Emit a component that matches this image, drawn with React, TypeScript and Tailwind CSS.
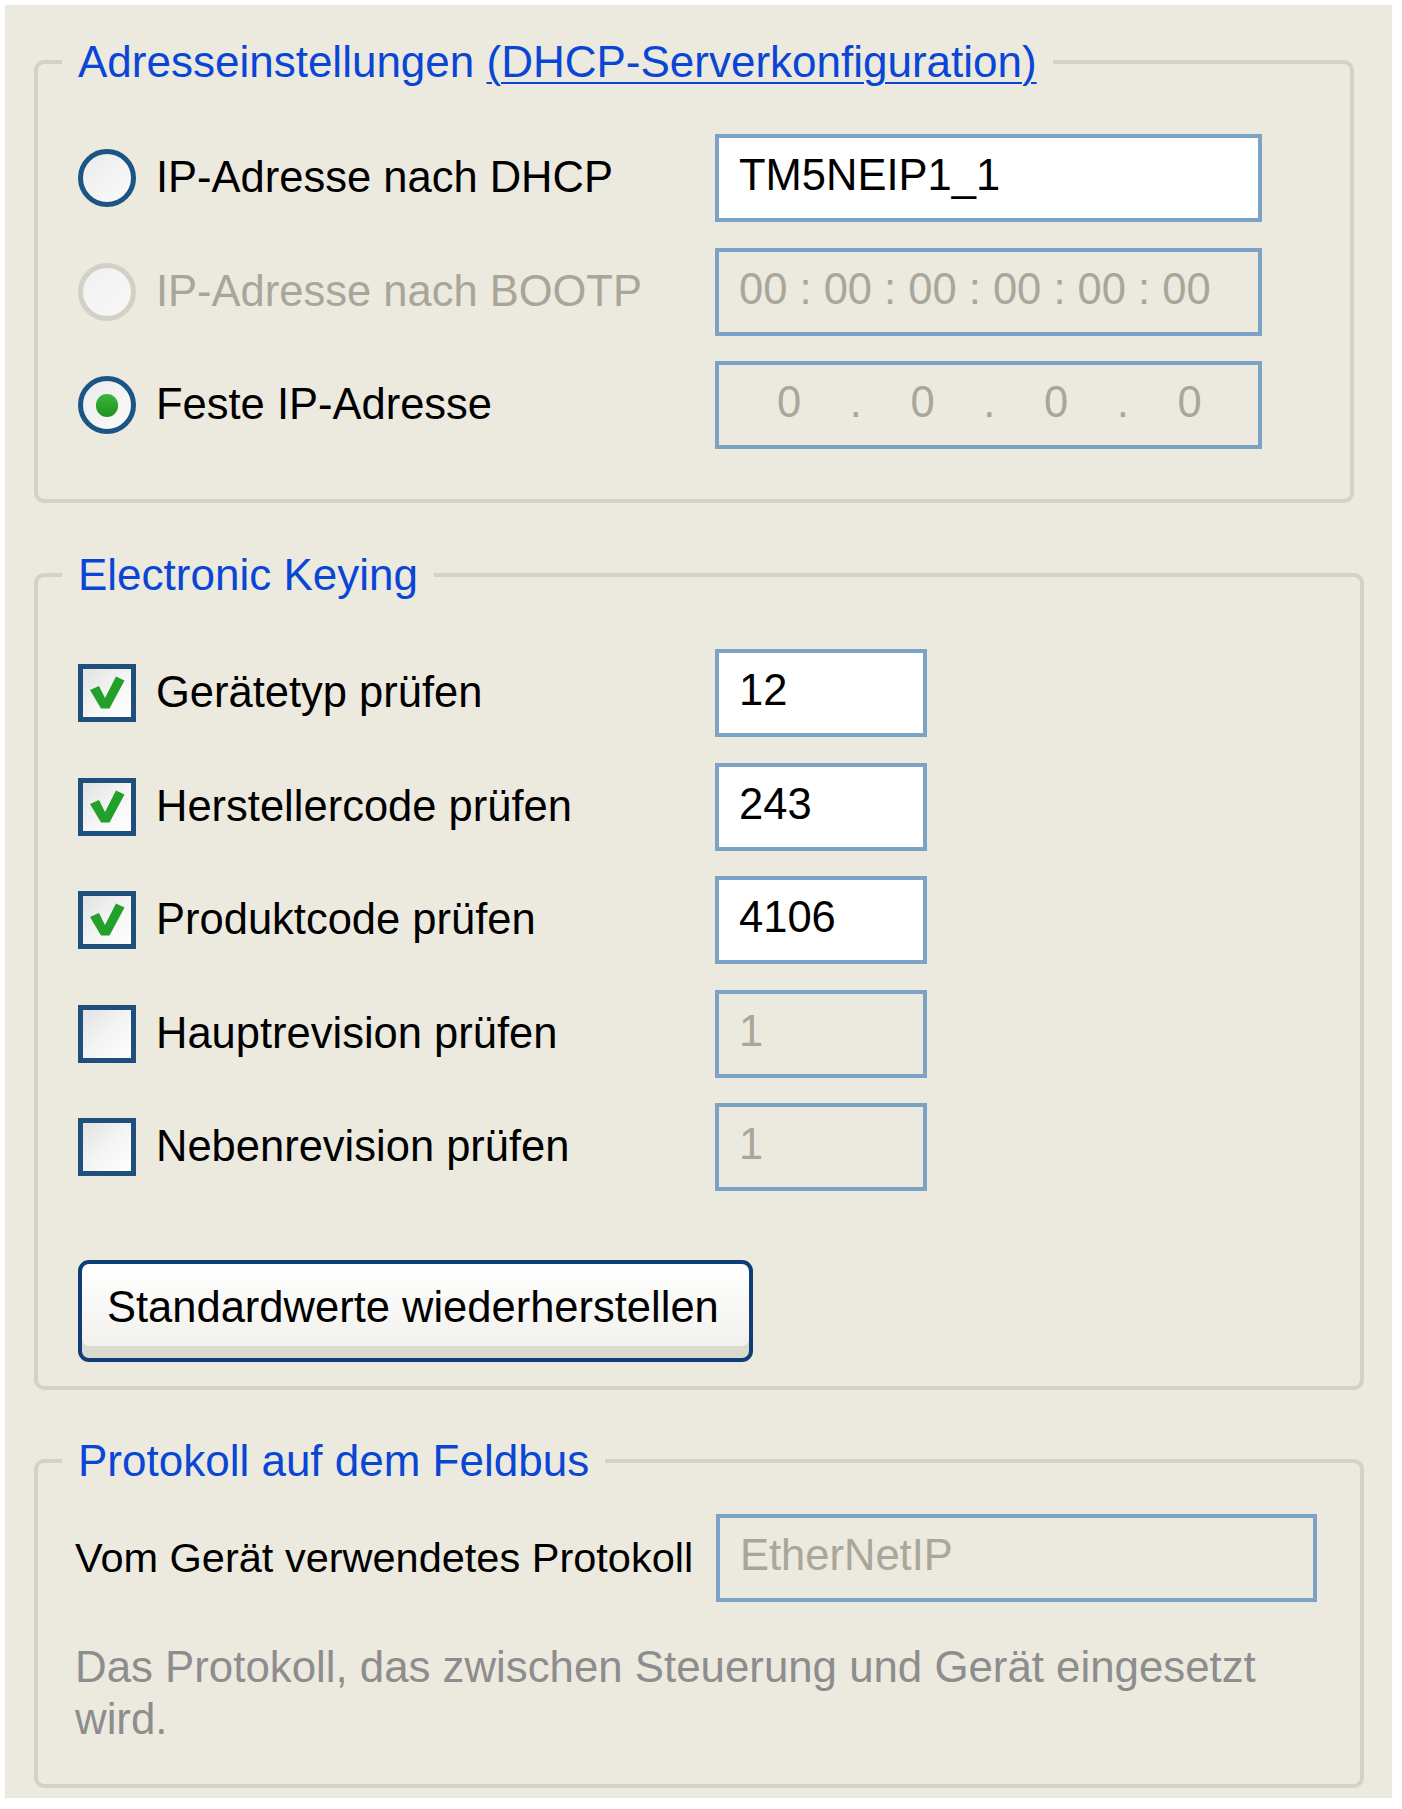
import type { ReactNode } from 'react';

function Radio({ checked, disabled }: { checked?: boolean; disabled?: boolean }) {
    return (
        <span
            className={
                disabled
                    ? 'w-[58px] h-[58px] shrink-0 rounded-full border-[5px] border-[#d3d1c5] bg-linear-to-br from-[#f1f1f1] to-[#f8f8f8] flex items-center justify-center'
                    : 'w-[58px] h-[58px] shrink-0 rounded-full border-[5px] border-[#1b5584] bg-linear-to-br from-[#ebebeb] to-[#fbfbfb] flex items-center justify-center'
            }
        >
            {checked && <span className="w-[22px] h-[23px] rounded-full bg-linear-to-b from-[#3cb53c] to-[#1f921f]"></span>}
        </span>
    );
}

function Checkbox({ checked }: { checked?: boolean }) {
    return (
        <span className="w-[58px] h-[58px] shrink-0 border-[5px] border-[#1e4f7d] bg-linear-to-br from-[#e2e2e2] via-[#f4f4f4] to-white flex items-center justify-center">
            {checked && (
                <svg width="48" height="48" viewBox="0 0 48 48">
                    <path d="M7 21 L16 17 L22 29 L33 7.5 L41.5 11.5 L26.5 39.5 L18 39.5 Z" fill="#22a02a" />
                </svg>
            )}
        </span>
    );
}

function Field({ children, white, width }: { children: ReactNode; white?: boolean; width: string }) {
    return (
        <div className={`${width} h-[88px] border-4 border-[#7ca2c5] ${white ? 'bg-white text-black' : 'text-[#a9a69a]'} px-5 pb-1 flex items-center whitespace-pre`}>
            {children}
        </div>
    );
}

function Legend({ children, shift = '-ml-4' }: { children: ReactNode; shift?: string }) {
    return <legend className={`${shift} px-4 text-[44px] leading-[50px] text-[#0a46d6]`}>{children}</legend>;
}

const keying = [
    { label: 'Gerätetyp prüfen', value: '12', on: true },
    { label: 'Herstellercode prüfen', value: '243', on: true },
    { label: 'Produktcode prüfen', value: '4106', on: true },
    { label: 'Hauptrevision prüfen', value: '1', on: false },
    { label: 'Nebenrevision prüfen', value: '1', on: false },
];

export default function App() {
    return (
        <div className="min-h-screen bg-white pt-[5px] pl-[5px] font-['Liberation_Sans',Arial,sans-serif] text-[43.5px]">
            <div className="w-[1387px] h-[1793px] bg-[#ece9df] pl-[29px] pt-[32px] flex flex-col">
                {/* Adresseinstellungen */}
                <fieldset className="w-[1320px] border-4 border-[#d4d2c1] rounded-[10px] pl-[40px] pt-[47px] pb-[50px]">
                    <Legend>
                        Adresseinstellungen <span className="underline underline-offset-[5px] decoration-2">(DHCP-Serverkonfiguration)</span>
                    </Legend>
                    <div className="flex flex-col gap-[25.5px]">
                        <div className="grid grid-cols-[637px_547px] items-center">
                            <div className="flex items-center gap-5">
                                <Radio />
                                <span>IP-Adresse nach DHCP</span>
                            </div>
                            <Field white width="w-[547px]">TM5NEIP1_1</Field>
                        </div>
                        <div className="grid grid-cols-[637px_547px] items-center">
                            <div className="flex items-center gap-5 text-[#a9a699]">
                                <Radio disabled />
                                <span>IP-Adresse nach BOOTP</span>
                            </div>
                            <Field width="w-[547px]">00 : 00 : 00 : 00 : 00 : 00</Field>
                        </div>
                        <div className="grid grid-cols-[637px_547px] items-center">
                            <div className="flex items-center gap-5">
                                <Radio checked />
                                <span>Feste IP-Adresse</span>
                            </div>
                            <div className="w-[547px] h-[88px] border-4 border-[#7ca2c5] text-[#a9a69a] pl-[30px] pb-1 flex items-center">
                                <span className="w-[80px] text-center">0</span>
                                <span className="w-[53.5px] text-center">.</span>
                                <span className="w-[80px] text-center">0</span>
                                <span className="w-[53.5px] text-center">.</span>
                                <span className="w-[80px] text-center">0</span>
                                <span className="w-[53.5px] text-center">.</span>
                                <span className="w-[80px] text-center">0</span>
                            </div>
                        </div>
                    </div>
                </fieldset>

                {/* Electronic Keying */}
                <fieldset className="w-[1330px] mt-[47px] border-4 border-[#d4d2c1] rounded-[10px] pl-[40px] pt-[49px] pb-[24px]">
                    <Legend>Electronic Keying</Legend>
                    <div className="flex flex-col gap-[25.5px]">
                        {keying.map(k => (
                            <div key={k.label} className="grid grid-cols-[637px_212px] items-center">
                                <div className="flex items-center gap-5">
                                    <Checkbox checked={k.on} />
                                    <span>{k.label}</span>
                                </div>
                                <Field white={k.on} width="w-[212px]">{k.value}</Field>
                            </div>
                        ))}
                    </div>
                    <button className="mt-[69px] w-[675px] h-[102px] border-4 border-[#0e3d77] rounded-[11px] bg-linear-to-b from-white to-[#f0efea] shadow-[inset_0_-12px_0_#dcd9cd] pl-[25px] pb-[6px] text-left text-black">
                        Standardwerte wiederherstellen
                    </button>
                </fieldset>

                {/* Protokoll */}
                <fieldset className="w-[1330px] mt-[46px] border-4 border-[#d4d2c1] rounded-[10px] pl-[37px] pt-[28px] pb-[39px]">
                    <Legend shift="-ml-[13px]">Protokoll auf dem Feldbus</Legend>
                    <div className="grid grid-cols-[641px_601px] items-center">
                        <span className="whitespace-nowrap text-[41.5px]">Vom Gerät verwendetes Protokoll</span>
                        <Field width="w-[601px]">EtherNetIP</Field>
                    </div>
                    <p className="mt-[39px] w-[1242px] text-[43.8px] leading-[52px] text-[#8d8d8d]">
                        Das Protokoll, das zwischen Steuerung und Gerät eingesetzt wird.
                    </p>
                </fieldset>
            </div>
        </div>
    );
}
